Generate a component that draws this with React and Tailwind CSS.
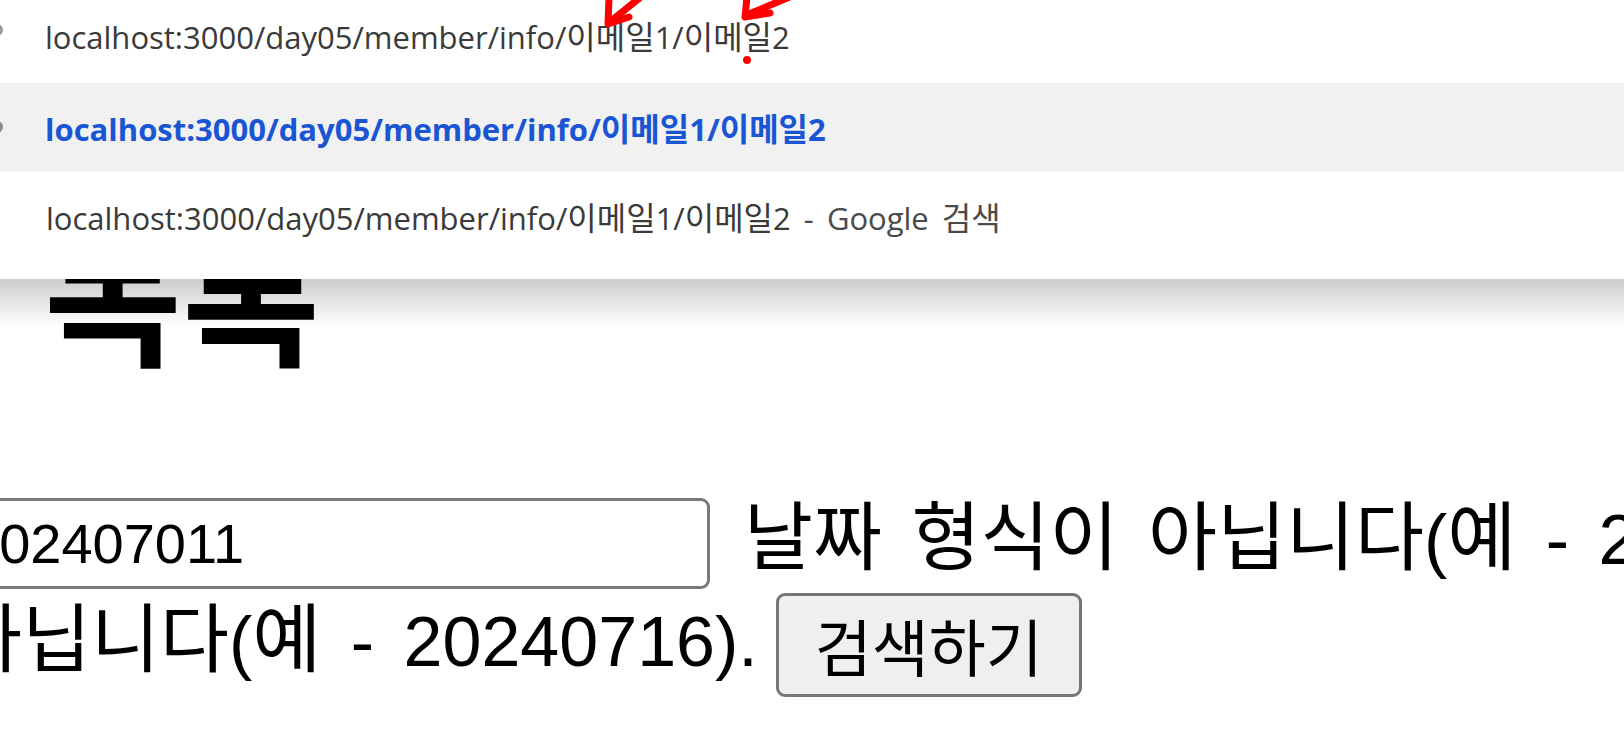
import React from "react";

// hangul runs get their own size so they keep the reference's advance width
function Ko({ text, className }) {
  return text.split(/([가-힣]+)/).map((part, i) =>
    /[가-힣]/.test(part) ? (
      <span key={i} className={className}>
        {part}
      </span>
    ) : (
      part
    )
  );
}

const omniKo = "font-['Noto_Sans_CJK_KR',sans-serif] text-[32px]";

function Url() {
  return <Ko text="localhost:3000/day05/member/info/이메일1/이메일2" className={omniKo} />;
}

function Suggestions() {
  return (
    <div className="absolute top-0 left-0 w-full font-['Open_Sans','Noto_Sans_CJK_KR',sans-serif] text-[31px] whitespace-nowrap">
      <div className="bg-white">
        <div className="relative h-[83px] pb-[12px] flex items-center pl-[45px] text-[#3a3a3a]">
          <span className="absolute left-[-9px] top-[24px] w-[12px] h-[12px] rounded-full bg-[#9a9a9a]" />
          <span>
            <Url />
          </span>
        </div>
        <div className="relative h-[89px] flex items-center pl-[45px] bg-[#f1f1f1] text-[#1a55d4] font-bold">
          <span className="absolute left-[-9px] top-[38px] w-[12px] h-[12px] rounded-full bg-[#8a8a8a]" />
          <span>
            <Url />
          </span>
        </div>
        <div className="h-[107px] pb-[17px] flex items-center pl-[46px] text-[#3a3a3a]">
          <span>
            <Url />
            <span className="text-[#4a4a4a] [word-spacing:5px]">
              {" - Google "}
              <Ko text="검색" className={omniKo} />
            </span>
          </span>
        </div>
      </div>
      <div className="h-[48px] bg-linear-to-b from-black/20 to-transparent" />
    </div>
  );
}

function Marks() {
  return (
    <svg className="absolute left-0 top-0" width="820" height="80" viewBox="0 0 820 80">
      <g stroke="#ff0000" strokeWidth="7" strokeLinecap="round" strokeLinejoin="round" fill="none">
        <path d="M642 -4 L611 21" />
        <path d="M609 -2 L608 24 L629 17" />
        <path d="M792 -4 L749 14" />
        <path d="M747 -3 L745 17 L770 13" />
      </g>
      <circle cx="747" cy="60" r="4" fill="#ff0000" />
    </svg>
  );
}

export default function App() {
  return (
    <div className="relative w-[1624px] h-[729px] overflow-hidden bg-white text-black">
      <div className="pt-[215px] font-['Liberation_Sans','Noto_Sans_CJK_KR',sans-serif] whitespace-nowrap">
        <h1 className="ml-[44px] h-[150px] font-['Noto_Sans_CJK_KR',sans-serif] font-bold text-[150px] leading-none">
          목록
        </h1>
        <div className="mt-[128px] h-[100px] flex items-center">
          <input
            readOnly
            value="202407011"
            className="shrink-0 -ml-[50px] w-[760px] h-[91px] pl-[15px] border-[3px] border-[#7a7a7a] rounded-[9px] bg-white text-[56px] font-['Liberation_Sans',sans-serif] outline-none"
          />
          <span className="shrink-0 ml-[34px] mb-[10px] text-[70px] leading-none [word-spacing:10px]">
            <Ko text="날짜 형식이 아닙니다(예 - 20240716)." className="text-[75px]" />
          </span>
        </div>
        <div className="h-[104px] flex items-center">
          <span className="shrink-0 -ml-[47px] mb-[10px] text-[70px] leading-none [word-spacing:10px]">
            <Ko text="아닙니다(예 - 20240716)." className="text-[75px]" />
          </span>
          <button className="shrink-0 ml-[18px] w-[306px] h-[104px] border-[3px] border-[#767676] rounded-[9px] bg-[#efefef] text-[62px] leading-none font-['Noto_Sans_CJK_KR',sans-serif]">
            검색하기
          </button>
        </div>
      </div>
      <Suggestions />
      <Marks />
    </div>
  );
}
